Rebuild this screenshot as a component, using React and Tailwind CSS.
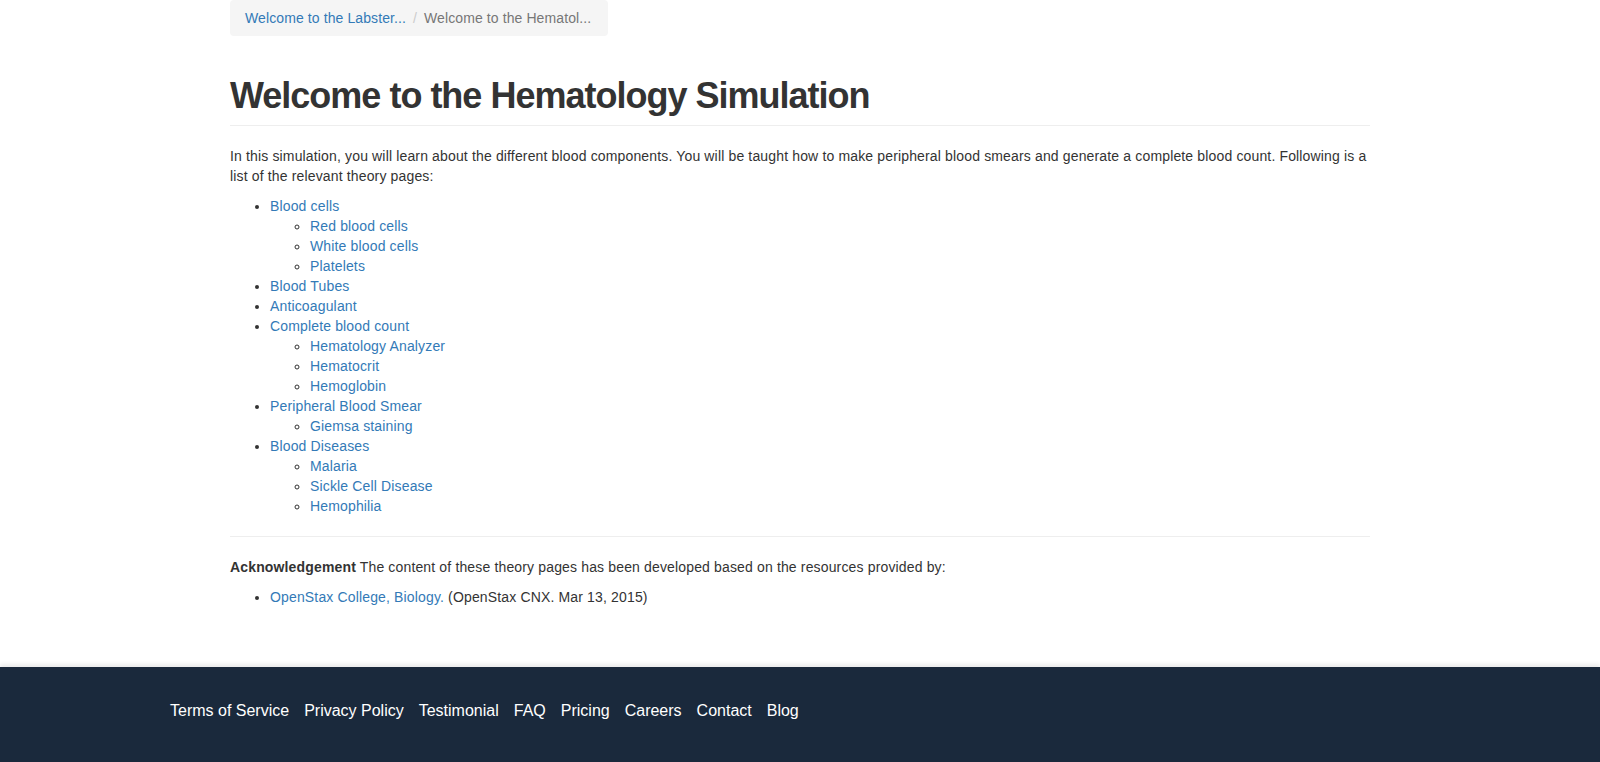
const topics = [
  { label: 'Blood cells', children: ['Red blood cells', 'White blood cells', 'Platelets'] },
  { label: 'Blood Tubes' },
  { label: 'Anticoagulant' },
  { label: 'Complete blood count', children: ['Hematology Analyzer', 'Hematocrit', 'Hemoglobin'] },
  { label: 'Peripheral Blood Smear', children: ['Giemsa staining'] },
  { label: 'Blood Diseases', children: ['Malaria', 'Sickle Cell Disease', 'Hemophilia'] },
]

const footerLinks = ['Terms of Service', 'Privacy Policy', 'Testimonial', 'FAQ', 'Pricing', 'Careers', 'Contact', 'Blog']

export default function App() {
  return (
    <div className="min-h-screen bg-white text-[#333] text-[14px] leading-[20px] tracking-[0.15px] font-['Liberation_Sans',Arial,sans-serif]">
      <div className="max-w-[1170px] mx-auto px-[15px]">
        {/* Breadcrumb */}
        <div className="flex items-center whitespace-nowrap bg-[#f5f5f5] rounded px-[15px] py-2 w-[378px] tracking-[0.1px]">
          <a href="#" className="text-[#337ab7]">Welcome to the Labster...</a>
          <span className="text-[#ccc] px-[7px]">/</span>
          <span className="text-[#777]">Welcome to the Hematol...</span>
        </div>

        {/* Header */}
        <div className="mt-10 mb-5 pb-[9px] border-b border-[#eee]">
          <h1 className="text-[36px] leading-[1.1] font-bold tracking-[-1px] text-[#333]">Welcome to the Hematology Simulation</h1>
        </div>

        <p className="mb-2.5">
          In this simulation, you will learn about the different blood components. You will be taught how to make peripheral blood smears and generate a complete blood count. Following is a list of the relevant theory pages:
        </p>

        <ul className="list-disc pl-10 mb-2.5">
          {topics.map((t) => (
            <li key={t.label}>
              <a href="#" className="text-[#337ab7]">{t.label}</a>
              {t.children && (
                <ul className="list-[circle] pl-10">
                  {t.children.map((c) => (
                    <li key={c}>
                      <a href="#" className="text-[#337ab7]">{c}</a>
                    </li>
                  ))}
                </ul>
              )}
            </li>
          ))}
        </ul>

        <hr className="my-5 border-0 border-t border-[#eee]" />

        <p className="mb-2.5">
          <strong>Acknowledgement</strong> The content of these theory pages has been developed based on the resources provided by:
        </p>
        <ul className="list-disc pl-10">
          <li>
            <a href="#" className="text-[#337ab7]">OpenStax College, Biology.</a> (OpenStax CNX. Mar 13, 2015)
          </li>
        </ul>
      </div>

      {/* Footer */}
      <footer className="mt-[60px] bg-[#1a293c] shadow-[0_-3px_4px_rgba(0,0,0,0.08)] h-[110px]">
        <div className="max-w-[1260px] mx-auto pt-[34px] flex gap-[15px] text-white text-[16px] leading-[20px] tracking-normal">
          {footerLinks.map((l) => (
            <a key={l} href="#" className="text-white">{l}</a>
          ))}
        </div>
      </footer>
    </div>
  )
}
